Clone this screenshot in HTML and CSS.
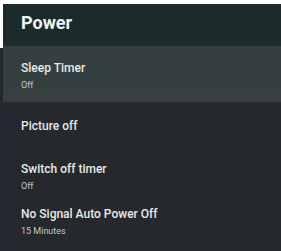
FILE: index.html
```html
<!DOCTYPE html>
<html>
<head>
<meta charset="utf-8">
<link rel="stylesheet" href="styles.css">
</head>
<body>
<div class="frame">
  <div class="panel">
    <div class="header"><h1 class="title">Power</h1></div>
    <div class="item selected">
      <div class="item-title">Sleep Timer</div>
      <div class="item-sub">Off</div>
    </div>
    <div class="item single">
      <div class="item-title">Picture off</div>
    </div>
    <div class="item">
      <div class="item-title">Switch off timer</div>
      <div class="item-sub">Off</div>
    </div>
    <div class="item">
      <div class="item-title">No Signal Auto Power Off</div>
      <div class="item-sub">15 Minutes</div>
    </div>
  </div>
</div>
</body>
</html>
```
FILE: styles.css
```css
html, body {
  margin: 0;
  padding: 0;
  background: #ffffff;
  width: 281px;
  height: 251px;
  overflow: hidden;
}
.frame {
  margin-top: 4px;
  padding-left: 3px;
  height: 247px;
  box-sizing: border-box;
  background: linear-gradient(to bottom, #ffffff 0, #ffffff 44px, #1f2a33 44px);
}
.panel {
  background: #25282c;
  height: 100%;
  font-family: Roboto, "Liberation Sans", sans-serif;
  color: #e8eaea;
}
.header {
  background: #1c2a2b;
  height: 37px;
  padding-left: 18px;
  display: flex;
  align-items: center;
  border-bottom: 5px solid #222e2e;
}
.title {
  margin: 0;
  font-size: 18px;
  font-weight: 700;
  color: #f2f4f4;
}
.item {
  padding: 14px 0 0 18px;
  height: 45px;
  box-sizing: border-box;
}
.item.selected {
  background: linear-gradient(#34403f 0%, #34403f 75%, #3a3f42 100%);
  height: 56px;
  padding-top: 14px;
}
.item.single {
  padding-top: 16px;
}
.item-title {
  font-size: 12px;
  font-weight: 500;
  line-height: 16px;
}
.item-sub {
  font-size: 9px;
  line-height: 12px;
  margin-top: 3px;
  color: #c4c8c8;
}
```
